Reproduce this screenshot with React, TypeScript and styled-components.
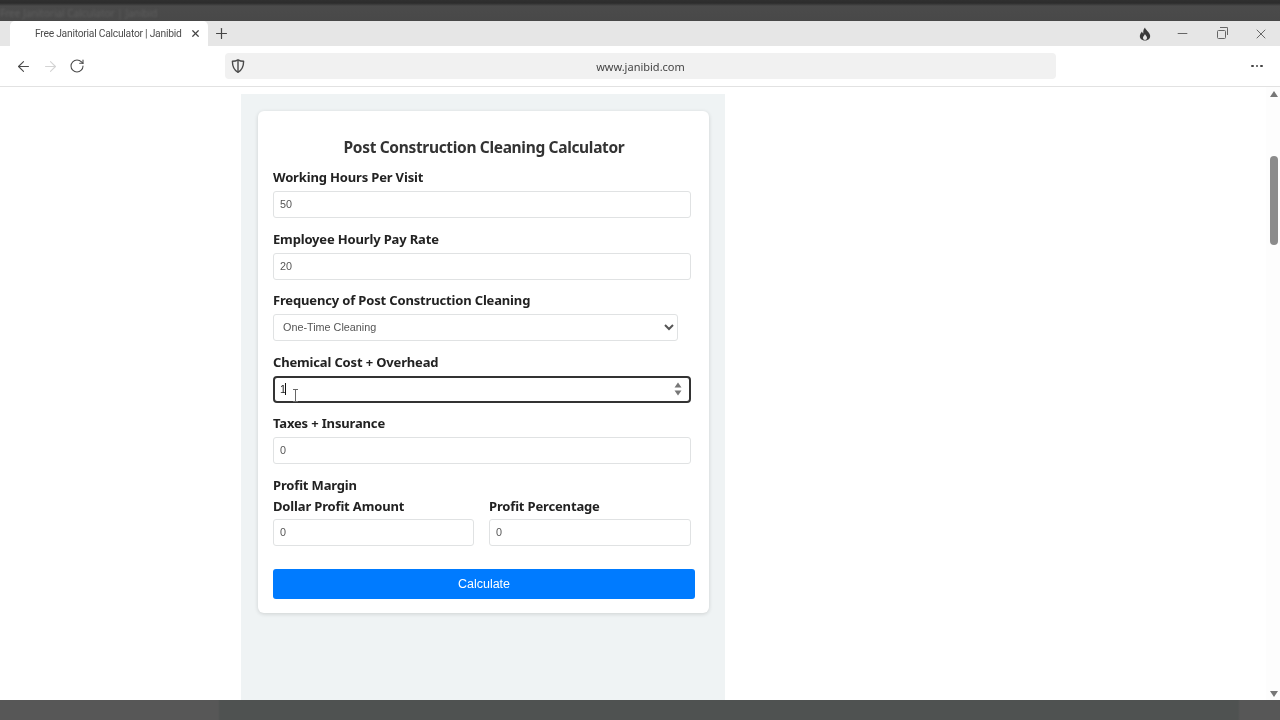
import styled, { createGlobalStyle } from 'styled-components';
import { ArrowLeft, ArrowRight, Minus, Plus, RotateCw, X } from 'lucide-react';

const GlobalStyle = createGlobalStyle`
  html, body {
    margin: 0;
    padding: 0;
    height: 100%;
    overflow: hidden;
    background: #fff;
  }
  * {
    box-sizing: border-box;
  }
`;

const Screen = styled.div`
  width: 1280px;
  height: 720px;
  display: flex;
  flex-direction: column;
  overflow: hidden;
  font-family: 'Noto Sans', 'Open Sans', sans-serif;
  filter: blur(0.35px);
`;

const DesktopBar = styled.div`
  height: 21px;
  flex: none;
  display: flex;
  align-items: center;
  padding: 4px 0 0 0;
  overflow: hidden;
  background: linear-gradient(#303030 0, #2c2c2c 3px, #4b4b4b 6px, #484848 100%);
`;

const GhostTitle = styled.span`
  font-size: 10px;
  color: #5e5e5e;
  white-space: nowrap;
  filter: blur(1px);
`;

const TabStrip = styled.div`
  height: 25px;
  flex: none;
  display: flex;
  align-items: stretch;
  padding-left: 10px;
  background: #e6e6e6;
`;

const Tab = styled.div`
  width: 198px;
  display: flex;
  align-items: center;
  padding-left: 25px;
  border-radius: 5px 5px 0 0;
  background: #ffffff;
  color: #4d4d4d;
  font-family: Roboto, 'Noto Sans', sans-serif;
  font-size: 10.3px;
  letter-spacing: -0.25px;
  white-space: nowrap;
`;

const TabClose = styled.span`
  display: flex;
  margin-left: auto;
  margin-right: 7px;
  color: #444;
`;

const NewTab = styled.span`
  display: flex;
  align-items: center;
  margin-left: 5px;
  color: #444;
`;

const WindowControls = styled.div`
  display: flex;
  align-items: center;
  margin-left: auto;
  color: #666;
`;

const ControlSlot = styled.span`
  width: 39px;
  display: flex;
  justify-content: center;
`;

const FlameIcon = styled.svg`
  margin-left: 2px;
`;

const Restore = styled.span`
  position: relative;
  width: 9px;
  height: 9px;
  margin-top: 1px;
  border: 1.2px solid #666;
  border-radius: 1.5px;

  &::after {
    content: '';
    position: absolute;
    top: -3.2px;
    right: -3.2px;
    width: 7px;
    height: 7px;
    border-top: 1.2px solid #666;
    border-right: 1.2px solid #666;
    border-radius: 0 1.5px 0 0;
  }
`;

const Toolbar = styled.div`
  height: 41px;
  flex: none;
  display: flex;
  align-items: center;
  padding-left: 16px;
  background: #ffffff;
  border-bottom: 1px solid #e2e2e2;
`;

const NavButton = styled.span<{ $off?: boolean }>`
  display: flex;
  justify-content: center;
  width: 14px;
  margin-right: 13px;
  color: ${(p) => (p.$off ? '#d4d4d4' : '#4a4a4a')};

  svg {
    flex: none;
  }
`;

const AddressBar = styled.div`
  width: 831px;
  height: 26px;
  margin-left: 128px;
  display: flex;
  align-items: center;
  padding-left: 5px;
  border-radius: 4px;
  background: #f1f1f1;
  color: #444;
  font-size: 11px;
`;

const Url = styled.span`
  flex: 1;
  text-align: center;
  padding-right: 21px;
`;

const MoreDots = styled.div`
  display: flex;
  gap: 2px;
  margin-left: 195px;
`;

const Dot = styled.span`
  width: 2.5px;
  height: 2.5px;
  border-radius: 50%;
  background: #444;
`;

const Viewport = styled.div`
  flex: 1;
  min-height: 0;
  display: flex;
  overflow: hidden;
  background: #ffffff;
`;

const Column = styled.main`
  width: 484px;
  margin: 7px 0 0 241px;
  padding: 17px 16px 0 17px;
  background: #eff3f4;
`;

const Card = styled.form`
  width: 451px;
  height: 502px;
  padding: 25px 14px 0 15px;
  border-radius: 6px;
  background: #ffffff;
  box-shadow: 0 1px 4px rgba(0, 0, 0, 0.14);
`;

const Title = styled.h2`
  margin: 0 0 10px;
  font-size: 15.5px;
  line-height: 22px;
  letter-spacing: -0.33px;
  font-weight: 700;
  text-align: center;
  color: #333;
`;

const Field = styled.div`
  position: relative;
  margin-bottom: 11.5px;
`;

const Label = styled.label`
  display: block;
  margin-bottom: 5px;
  font-size: 13px;
  line-height: 18px;
  letter-spacing: -0.16px;
  font-weight: 700;
  color: #222;
`;

const Input = styled.input<{ $focused?: boolean }>`
  display: block;
  width: 418px;
  height: 27px;
  padding: 0 6px 1px;
  border: 1px solid #e0e2e3;
  border-radius: 3px;
  outline: none;
  background: #fff;
  font-family: 'Liberation Sans', Arial, sans-serif;
  font-size: 10.8px;
  color: #555;
  appearance: textfield;
  ${(p) =>
    p.$focused &&
    `
    border: 2px solid #333;
    border-radius: 4px;
    padding: 0 5px 1px;
    color: #222;
  `}
`;

const Select = styled.select`
  display: block;
  width: 405px;
  height: 27px;
  padding: 0 5px 1px;
  border: 1px solid #e0e2e3;
  border-radius: 3px;
  outline: none;
  background: #fff;
  font-family: 'Liberation Sans', Arial, sans-serif;
  font-size: 10.8px;
  color: #555;
`;

const Caret = styled.span`
  position: absolute;
  left: 12px;
  top: 30px;
  width: 1px;
  height: 12px;
  background: #111;
`;

const Spinner = styled.svg`
  position: absolute;
  right: 13px;
  top: 29px;
`;

const Ibeam = styled.svg`
  position: absolute;
  left: 19px;
  top: 36px;
`;

const SubHeading = styled.div`
  font-size: 13px;
  line-height: 18px;
  letter-spacing: -0.16px;
  font-weight: 700;
  color: #222;
  margin-bottom: 3.5px;
`;

const SplitRow = styled.div`
  display: grid;
  grid-template-columns: 201px 202px;
  column-gap: 15px;
  margin-bottom: 23px;

  ${Label} {
    margin-bottom: 4px;
  }

  ${Input} {
    width: 100%;
  }
`;

const Submit = styled.button`
  display: block;
  width: 100%;
  height: 30px;
  border: none;
  border-radius: 3px;
  background: #007bff;
  color: #fff;
  font-family: 'Liberation Sans', Arial, sans-serif;
  font-size: 12.5px;
`;

const Scrollbar = styled.div`
  width: 14px;
  margin-left: auto;
  display: flex;
  flex-direction: column;
  align-items: center;
  padding: 4px 0 3px 1px;
  background: #fdfdfd;
`;

const ArrowUp = styled.span`
  border-left: 4.5px solid transparent;
  border-right: 4.5px solid transparent;
  border-bottom: 6px solid #777;
`;

const ArrowDown = styled.span`
  margin-top: auto;
  border-left: 4.5px solid transparent;
  border-right: 4.5px solid transparent;
  border-top: 6px solid #777;
`;

const Thumb = styled.div`
  width: 8px;
  height: 89px;
  margin-top: 59px;
  border-radius: 4px;
  background: #8b8b8b;
`;

const BottomBar = styled.div`
  height: 20px;
  flex: none;
  background: linear-gradient(90deg, #575757 0, #575757 218px, #4f5251 220px, #4f5251 1238px, #575757 1240px);
`;

const ShieldIcon = () => (
  <svg width="16" height="16" viewBox="0 0 16 16" fill="none" stroke="#4a4a4a" strokeWidth="1.4" strokeLinejoin="round">
    <path d="M8 1.8c1.6 1 3.6 1.5 5.6 1.5 0 5-1 8.6-5.6 11-4.6-2.4-5.6-6-5.6-11 2 0 4-.5 5.6-1.5z" />
    <path d="M8 2v12" />
  </svg>
);

const Flame = () => (
  <FlameIcon width="14" height="14" viewBox="0 0 14 14" fill="#3a3a3a" fillRule="evenodd">
    <path d="M7 .5C7.5 3 11 4.5 12 8c.8 3-1.5 5.5-5 5.5S1.200 11 2 8c.4-1.500 1.300-2.500 2-3.500.3 1.200.8 1.700 1.300 1.900C5 4 5.600 2 7 .5zM7 7c.3 1.300 2 2 2 3.800C9 12.200 8 13 7 13s-2-.8-2-2.200C5 9.500 6.500 8.500 7 7z" />
  </FlameIcon>
);

const fields = [
  { label: 'Working Hours Per Visit', value: '50' },
  { label: 'Employee Hourly Pay Rate', value: '20' },
];

const App = () => {
  return (
    <Screen>
      <GlobalStyle />
      <DesktopBar>
        <GhostTitle>Free Janitorial Calculator | Janibid</GhostTitle>
      </DesktopBar>
      <TabStrip>
        <Tab>
          Free Janitorial Calculator | Janibid
          <TabClose>
            <X size={11} strokeWidth={2.6} />
          </TabClose>
        </Tab>
        <NewTab>
          <Plus size={17} strokeWidth={1.7} />
        </NewTab>
        <WindowControls>
          <ControlSlot>
            <Flame />
          </ControlSlot>
          <ControlSlot>
            <Minus size={15} strokeWidth={1.8} />
          </ControlSlot>
          <ControlSlot>
            <Restore />
          </ControlSlot>
          <ControlSlot>
            <X size={16} strokeWidth={1.5} />
          </ControlSlot>
        </WindowControls>
      </TabStrip>
      <Toolbar>
        <NavButton>
          <ArrowLeft size={17} strokeWidth={1.5} />
        </NavButton>
        <NavButton $off>
          <ArrowRight size={17} strokeWidth={1.5} />
        </NavButton>
        <NavButton>
          <RotateCw size={16} strokeWidth={1.6} />
        </NavButton>
        <AddressBar>
          <ShieldIcon />
          <Url>www.janibid.com</Url>
        </AddressBar>
        <MoreDots>
          <Dot />
          <Dot />
          <Dot />
        </MoreDots>
      </Toolbar>
      <Viewport>
        <Column>
          <Card>
            <Title>Post Construction Cleaning Calculator</Title>
            {fields.map((field) => (
              <Field key={field.label}>
                <Label>{field.label}</Label>
                <Input type="text" readOnly value={field.value} />
              </Field>
            ))}
            <Field>
              <Label>Frequency of Post Construction Cleaning</Label>
              <Select defaultValue="one">
                <option value="one">One-Time Cleaning</option>
              </Select>
            </Field>
            <Field>
              <Label>Chemical Cost + Overhead</Label>
              <Input type="text" readOnly value="1" $focused />
              <Caret />
              <Spinner width="8" height="14" viewBox="0 0 8 14" fill="#777">
                <path d="M4 0.5 7.5 5.5H0.5z" />
                <path d="M4 13.5 0.5 8.5H7.5z" />
              </Spinner>
              <Ibeam width="7" height="13" viewBox="0 0 7 13" fill="none" stroke="#666" strokeWidth="1">
                <path d="M1 .5h5M3.5.5v12M1 12.5h5" />
              </Ibeam>
            </Field>
            <Field>
              <Label>Taxes + Insurance</Label>
              <Input type="text" readOnly value="0" />
            </Field>
            <SubHeading>Profit Margin</SubHeading>
            <SplitRow>
              <div>
                <Label>Dollar Profit Amount</Label>
                <Input type="text" readOnly value="0" />
              </div>
              <div>
                <Label>Profit Percentage</Label>
                <Input type="text" readOnly value="0" />
              </div>
            </SplitRow>
            <Submit type="button">Calculate</Submit>
          </Card>
        </Column>
        <Scrollbar>
          <ArrowUp />
          <Thumb />
          <ArrowDown />
        </Scrollbar>
      </Viewport>
      <BottomBar />
    </Screen>
  );
};

export default App;
